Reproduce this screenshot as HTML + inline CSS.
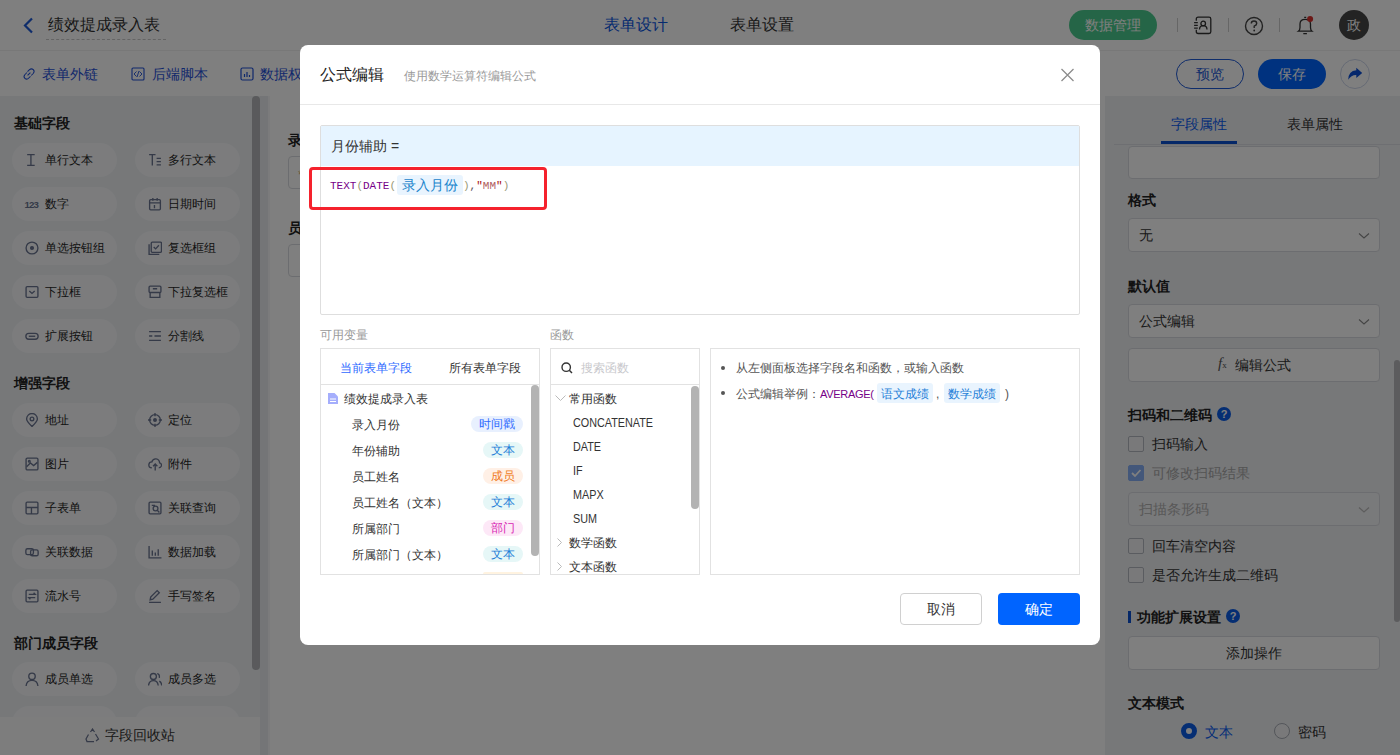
<!DOCTYPE html>
<html><head><meta charset="utf-8">
<style>
*{box-sizing:border-box;margin:0;padding:0}
html,body{width:1400px;height:755px;overflow:hidden;background:#fff;font-family:"Liberation Sans",sans-serif;color:#333}
.a{position:absolute}
.t{white-space:nowrap;line-height:1}
/* header */
#hdr{left:0;top:0;width:1400px;height:51px;background:#fff;border-bottom:1px solid #f0f0f0}
#tb{left:0;top:51px;width:1400px;height:45px;background:#fff}
#lp{left:0;top:96px;width:260px;height:659px;background:#eef0f3}
#band{left:260px;top:96px;width:8px;height:659px;background:#e9ebee}
#cv{left:268px;top:96px;width:837px;height:659px;background:#f6f7f9}
#rp{left:1105px;top:96px;width:295px;height:659px;background:#eef0f3}
.chip{position:absolute;width:105px;height:34px;border-radius:17px;background:#f8f9fb}
.chip svg{position:absolute;left:13px;top:10px}
.chip span{position:absolute;left:33px;top:9.5px;font-size:12px;line-height:14px;color:#262626;white-space:nowrap}
.sec{position:absolute;left:14px;font-size:14px;font-weight:bold;color:#222;line-height:14px;white-space:nowrap}
.ic{fill:none;stroke:#6a7490;stroke-width:1.25}
.box{position:absolute;border:1px solid #d9dbe0;border-radius:4px;background:#fff}
.lbl{position:absolute;font-size:14px;font-weight:bold;color:#222;line-height:14px;white-space:nowrap}
.cb{position:absolute;width:16px;height:16px;border:1px solid #b4b8c0;border-radius:2px;background:#f2f3f5}
#ov{left:0;top:0;width:1400px;height:755px;background:rgba(0,0,0,.5)}
.fn{font-size:12px;color:#333;transform:scaleX(0.9);transform-origin:0 0}
#modal{left:300px;top:45px;width:800px;height:600px;background:#fff;border-radius:8px}
</style></head><body>

<!-- ===== HEADER ===== -->
<div id="hdr" class="a"></div>
<svg class="a" style="left:22px;top:17px" width="12" height="17" viewBox="0 0 12 17"><path d="M10 1.5 L3 8.5 L10 15.5" fill="none" stroke="#1f5ad6" stroke-width="2.2"/></svg>
<div class="a t" style="left:48px;top:17px;font-size:16px;color:#333">绩效提成录入表</div>
<div class="a" style="left:46px;top:39px;width:120px;border-top:1px dashed #c8c8c8"></div>
<div class="a t" style="left:604px;top:17px;font-size:16px;color:#0a56e0">表单设计</div>
<div class="a t" style="left:730px;top:17px;font-size:16px;color:#333">表单设置</div>
<div class="a" style="left:1069px;top:10px;width:88px;height:30px;border-radius:15px;background:#4bcb8e"></div>
<div class="a t" style="left:1085px;top:18px;font-size:14px;color:#fff">数据管理</div>
<div class="a" style="left:1177px;top:18px;width:1px;height:14px;background:#ccc"></div>
<div class="a" style="left:1228px;top:18px;width:1px;height:14px;background:#ccc"></div>
<div class="a" style="left:1279px;top:18px;width:1px;height:14px;background:#ccc"></div>
<svg class="a" style="left:1193px;top:16px" width="20" height="20" viewBox="0 0 20 20" fill="none" stroke="#333" stroke-width="1.3"><path d="M3.3 4.8 V3 Q3.3 1.2 5.1 1.2 H16 Q17.8 1.2 17.8 3 V15.7 Q17.8 17.5 16 17.5 H5.1 Q3.3 17.5 3.3 15.7 V13.8"/><path d="M1.1 6.6h3.7M1.1 9.3h3.7M1.1 12.1h3.7"/><circle cx="10.2" cy="7.5" r="2.3"/><path d="M6.5 13.6 Q6.5 9.6 10.2 9.6 Q14 9.6 14 13.6"/></svg>
<svg class="a" style="left:1244px;top:16px" width="20" height="20" viewBox="0 0 20 20"><circle cx="10" cy="10" r="8.5" fill="none" stroke="#444" stroke-width="1.4"/><path d="M7.3 7.6 Q7.3 5 10 5 Q12.7 5 12.7 7.4 Q12.7 9 10.2 10.2 L10.2 12" fill="none" stroke="#444" stroke-width="1.4"/><circle cx="10.2" cy="14.5" r="0.9" fill="#444"/></svg>
<svg class="a" style="left:1296px;top:15px" width="20" height="21" viewBox="0 0 20 21" fill="none" stroke="#333" stroke-width="1.3"><path d="M2.4 16.2 Q4 15 4 12.5 V9 Q4 4.3 9.2 4.3 Q14.5 4.3 14.5 9 V12.5 Q14.5 15 16 16.2 Z"/><path d="M8.2 2.3h2M7.3 18.6h3.6"/><circle cx="14.1" cy="3.9" r="3" fill="#d9302c" stroke="none"/></svg>
<div class="a" style="left:1339px;top:10px;width:30px;height:30px;border-radius:15px;background:#474747"></div>
<div class="a t" style="left:1347px;top:18px;font-size:14px;color:#fff">政</div>

<!-- ===== TOOLBAR ===== -->
<div id="tb" class="a"></div>
<svg class="a" style="left:22px;top:67px" width="14" height="14" viewBox="0 0 14 14"><path d="M5.6 8.4 L8.4 5.6 M5 5.5 L3 7.5 Q1 9.5 3 11.5 Q5 13 6.8 11 L8.5 9.3 M5.5 4.7 L7.5 2.7 Q9.5 1 11.3 2.7 Q13 4.5 11.2 6.5 L9.2 8.5" fill="none" stroke="#1f50d8" stroke-width="1.05"/></svg>
<div class="a t" style="left:42px;top:67px;font-size:14px;color:#1f50d8">表单外链</div>
<svg class="a" style="left:131px;top:67px" width="14" height="14" viewBox="0 0 14 14"><rect x="1" y="1" width="12" height="12" rx="1" fill="none" stroke="#1f50d8" stroke-width="1.1"/><path d="M5.5 4.5 L3 7 L5.5 9.5 M8.5 4.5 L11 7 L8.5 9.5 M8 4 L6 10" fill="none" stroke="#1f50d8" stroke-width="0.9"/></svg>
<div class="a t" style="left:152px;top:67px;font-size:14px;color:#1f50d8">后端脚本</div>
<svg class="a" style="left:240px;top:67px" width="14" height="14" viewBox="0 0 14 14"><rect x="1" y="1" width="12" height="12" rx="1.5" fill="none" stroke="#1f50d8" stroke-width="1.2"/><path d="M4.5 10V7M7 10V5M9.5 10V8" stroke="#1f50d8" stroke-width="1.2"/></svg>
<div class="a t" style="left:260px;top:67px;font-size:14px;color:#1f50d8">数据权限</div>
<div class="a" style="left:1176px;top:59px;width:68px;height:30px;border-radius:15px;border:1.5px solid #1f5ad6;background:#fff"></div>
<div class="a t" style="left:1196px;top:67px;font-size:14px;color:#1f5ad6">预览</div>
<div class="a" style="left:1258px;top:59px;width:68px;height:30px;border-radius:15px;background:#0064ff"></div>
<div class="a t" style="left:1278px;top:67px;font-size:14px;color:#fff">保存</div>
<div class="a" style="left:1340px;top:59px;width:30px;height:30px;border-radius:15px;background:#fff;border:1px solid #cdd6ea"></div>
<svg class="a" style="left:1347px;top:66px" width="16" height="16" viewBox="0 0 16 16"><path d="M1.2 13.8 Q1.4 5 9.3 4.3 V1.7 L15.2 6.9 L9.3 12 V9 Q4.3 8.8 1.2 13.8 Z" fill="#0a4fd8"/></svg>

<!-- ===== LEFT PANEL ===== -->
<div id="lp" class="a"></div>
<div class="a" style="left:0;top:0;width:1px;height:1px">
<div class="sec" style="top:116px">基础字段</div>
<div class="sec" style="top:376px">增强字段</div>
<div class="sec" style="top:636px">部门成员字段</div>
<div class="chip" style="left:12px;top:143px"><svg width="14" height="14" viewBox="0 0 13 13" class="ic"><path d="M2 1.5h7M2 11.5h7M5.5 1.5v10" /></svg><span>单行文本</span></div>
<div class="chip" style="left:135px;top:143px"><svg width="14" height="14" viewBox="0 0 13 13" class="ic"><path d="M1 1.5h6M4 1.5v10M8 5h4M8 8h4M8 11h4"/></svg><span>多行文本</span></div>
<div class="chip" style="left:12px;top:187px"><svg width="14" height="14" viewBox="0 0 13 13" class="ic" style="overflow:visible"><text x="-0.5" y="9.8" font-size="9" font-weight="bold" fill="#6a7490" stroke="none" font-family="Liberation Sans" textLength="13.5">123</text></svg><span>数字</span></div>
<div class="chip" style="left:135px;top:187px"><svg width="14" height="14" viewBox="0 0 13 13" class="ic"><rect x="1.5" y="2.5" width="10" height="9.5" rx="1"/><path d="M1.5 5.5h10M4.5 1v2.5M8.5 1v2.5M6 7.5v3"/></svg><span>日期时间</span></div>
<div class="chip" style="left:12px;top:231px"><svg width="14" height="14" viewBox="0 0 13 13" class="ic"><circle cx="6.5" cy="6.5" r="5.5"/><circle cx="6.5" cy="6.5" r="1.3" fill="#6a7490"/></svg><span>单选按钮组</span></div>
<div class="chip" style="left:135px;top:231px"><svg width="14" height="14" viewBox="0 0 13 13" class="ic"><path d="M1 3v9.5h9.5"/><rect x="3" y="1" width="9.5" height="9.5" rx="1"/><path d="M5.3 5.5l1.8 1.8 3-3.3"/></svg><span>复选框组</span></div>
<div class="chip" style="left:12px;top:275px"><svg width="14" height="14" viewBox="0 0 13 13" class="ic"><rect x="1" y="1.5" width="11" height="10" rx="1"/><path d="M4 5.5l2.5 2.3 2.5-2.3"/></svg><span>下拉框</span></div>
<div class="chip" style="left:135px;top:275px"><svg width="14" height="14" viewBox="0 0 13 13" class="ic"><rect x="1" y="1" width="11" height="6" rx="1"/><path d="M2 7v4.5h9V7M4.5 3.5h4"/></svg><span>下拉复选框</span></div>
<div class="chip" style="left:12px;top:319px"><svg width="14" height="14" viewBox="0 0 13 13" class="ic"><rect x="0.8" y="4" width="11.4" height="5.5" rx="2.75"/><path d="M3.5 6.75h6"/></svg><span>扩展按钮</span></div>
<div class="chip" style="left:135px;top:319px"><svg width="14" height="14" viewBox="0 0 13 13" class="ic"><path d="M1 2.5h11M1 6.5h3M6 6.5h6M1 10.5h11"/></svg><span>分割线</span></div>
<div class="chip" style="left:12px;top:403px"><svg width="14" height="14" viewBox="0 0 13 13" class="ic"><path d="M6.5 12.5 Q1.5 7.5 1.5 5.5 A5 5 0 0 1 11.5 5.5 Q11.5 7.5 6.5 12.5Z"/><circle cx="6.5" cy="5.5" r="1.7"/></svg><span>地址</span></div>
<div class="chip" style="left:135px;top:403px"><svg width="14" height="14" viewBox="0 0 13 13" class="ic"><circle cx="6.5" cy="6.5" r="5"/><circle cx="6.5" cy="6.5" r="1.2" fill="#6a7490"/><path d="M6.5 0v3M6.5 10v3M0 6.5h3M10 6.5h3"/></svg><span>定位</span></div>
<div class="chip" style="left:12px;top:447px"><svg width="14" height="14" viewBox="0 0 13 13" class="ic"><rect x="1" y="1" width="11" height="11" rx="1.2"/><path d="M1.5 9 L5 5.5 L8 8 L11.5 5"/><circle cx="4" cy="4" r="0.8"/></svg><span>图片</span></div>
<div class="chip" style="left:135px;top:447px"><svg width="14" height="14" viewBox="0 0 13 13" class="ic"><path d="M3.5 10 Q0.5 10 0.8 7 Q1.2 4.5 3.5 4.6 Q4.5 1.5 7.5 1.8 Q10.5 2.2 10.8 5.5 Q12.8 6 12.5 8.2 Q12 10 10 10"/><path d="M6.7 12.5V6.5M4.7 8.5l2-2 2 2"/></svg><span>附件</span></div>
<div class="chip" style="left:12px;top:491px"><svg width="14" height="14" viewBox="0 0 13 13" class="ic"><rect x="1" y="1" width="11" height="11" rx="1"/><path d="M1 6h11M6 6v6"/></svg><span>子表单</span></div>
<div class="chip" style="left:135px;top:491px"><svg width="14" height="14" viewBox="0 0 13 13" class="ic"><rect x="1" y="1" width="11" height="11" rx="1"/><circle cx="7" cy="7" r="2.2"/><path d="M8.6 8.6l2 2M3.5 4h3"/></svg><span>关联查询</span></div>
<div class="chip" style="left:12px;top:535px"><svg width="14" height="14" viewBox="0 0 13 13" class="ic"><rect x="0.8" y="3.5" width="7" height="5.5" rx="1.5"/><rect x="5.2" y="4.5" width="7" height="5.5" rx="1.5"/></svg><span>关联数据</span></div>
<div class="chip" style="left:135px;top:535px"><svg width="14" height="14" viewBox="0 0 13 13" class="ic"><path d="M1 1v11h11.5M4 5v5M6.8 7v3M9.5 4v6"/></svg><span>数据加载</span></div>
<div class="chip" style="left:12px;top:579px"><svg width="14" height="14" viewBox="0 0 13 13" class="ic"><rect x="1" y="1" width="11" height="11" rx="1"/><path d="M3.5 5h6l-1.5-1.5M9.5 8h-6l1.5 1.5"/></svg><span>流水号</span></div>
<div class="chip" style="left:135px;top:579px"><svg width="14" height="14" viewBox="0 0 13 13" class="ic"><path d="M2 10 L2.5 7.5 L8.5 1.5 L10.5 3.5 L4.5 9.5 Z M1 12.5h11"/></svg><span>手写签名</span></div>
<div class="chip" style="left:12px;top:662px"><svg width="14" height="14" viewBox="0 0 13 13" class="ic"><circle cx="6.5" cy="4" r="3"/><path d="M1 13 Q1.5 7.8 6.5 7.8 Q11.5 7.8 12 13"/></svg><span>成员单选</span></div>
<div class="chip" style="left:135px;top:662px"><svg width="14" height="14" viewBox="0 0 13 13" class="ic"><circle cx="5" cy="4.2" r="2.8"/><path d="M0.5 12.5 Q1 8 5 8 Q9 8 9.5 12.5M8.5 1.5 Q11 1.8 10.5 5.5M10.5 8.5 Q12.5 9.5 12.8 12.5"/></svg><span>成员多选</span></div>
<div class="chip" style="left:12px;top:706px"><svg width="14" height="14" viewBox="0 0 13 13" class="ic"></svg></div>
<div class="chip" style="left:135px;top:706px"><svg width="14" height="14" viewBox="0 0 13 13" class="ic"></svg></div>
</div>
<div class="a" style="left:252px;top:96px;width:8px;height:574px;border-radius:4px;background:#b4b5b8"></div>
<div class="a" style="left:0;top:717px;width:260px;height:38px;background:#fbfbfb"></div>
<svg class="a ic" style="left:85px;top:728px" width="15" height="15" viewBox="0 0 15 15"><path d="M5.5 4 L7.5 1 L9.5 4 M10.5 6 L13.5 11 L11 13 M9 13.5H2 L1 11 L3.5 6.5"/></svg>
<div class="a t" style="left:105px;top:728px;font-size:14px;color:#333">字段回收站</div>
<div id="band" class="a"></div>
<div id="cv" class="a"></div>
<div class="a" style="left:270px;top:96px;width:835px;height:659px;background:#fff"></div>
<div class="a t" style="left:288px;top:133px;font-size:14px;font-weight:bold;color:#222">录入月份</div>
<div class="box" style="left:288px;top:156px;width:400px;height:33px"></div>
<div class="a t" style="left:298px;top:168px;font-size:13px;color:#c9a86a">*</div>
<div class="a t" style="left:288px;top:221px;font-size:14px;font-weight:bold;color:#222">员工姓名</div>
<div class="box" style="left:288px;top:244px;width:400px;height:33px"></div>

<!-- ===== RIGHT PANEL ===== -->
<div id="rp" class="a"></div>
<div class="a t" style="left:1171px;top:117px;font-size:14px;color:#0a5cf0">字段属性</div>
<div class="a t" style="left:1287px;top:117px;font-size:14px;color:#333">表单属性</div>
<div class="a" style="left:1114px;top:144px;width:286px;height:1px;background:#dcdfe4"></div>
<div class="a" style="left:1161px;top:141px;width:76px;height:3px;background:#0a50d0"></div>
<div class="box" style="left:1128px;top:146px;width:252px;height:33px"></div>
<div class="lbl" style="left:1128px;top:193px">格式</div>
<div class="box" style="left:1128px;top:218px;width:252px;height:34px"></div>
<div class="a t" style="left:1139px;top:228px;font-size:14px;color:#333">无</div>
<svg class="a" style="left:1358px;top:232px" width="12" height="8" viewBox="0 0 12 8"><path d="M1 1.5 L6 6 L11 1.5" fill="none" stroke="#8a8a8a" stroke-width="1.1"/></svg>
<div class="lbl" style="left:1128px;top:279px">默认值</div>
<div class="box" style="left:1128px;top:304px;width:252px;height:34px"></div>
<div class="a t" style="left:1139px;top:314px;font-size:14px;color:#333">公式编辑</div>
<svg class="a" style="left:1358px;top:318px" width="12" height="8" viewBox="0 0 12 8"><path d="M1 1.5 L6 6 L11 1.5" fill="none" stroke="#8a8a8a" stroke-width="1.1"/></svg>
<div class="box" style="left:1128px;top:348px;width:252px;height:34px"></div>
<div class="a t" style="left:1218px;top:356px;font-size:15px;font-style:italic;font-family:'Liberation Serif',serif;color:#555">f<span style="font-size:9px;font-style:normal">x</span></div>
<div class="a t" style="left:1235px;top:358px;font-size:14px;color:#333">编辑公式</div>
<div class="lbl" style="left:1128px;top:408px">扫码和二维码</div>
<div class="a" style="left:1217px;top:407px;width:14px;height:14px;border-radius:7px;background:#0a5ce6;color:#fff;font-size:11px;font-weight:bold;line-height:14px;text-align:center">?</div>
<div class="cb" style="left:1128px;top:436px"></div>
<div class="a t" style="left:1152px;top:437px;font-size:14px;color:#333">扫码输入</div>
<div class="cb" style="left:1128px;top:465px;background:#86aef5;border-color:#86aef5"></div>
<svg class="a" style="left:1130px;top:467px" width="12" height="12" viewBox="0 0 12 12"><path d="M2 6 L5 9 L10.5 3" fill="none" stroke="#fff" stroke-width="1.8"/></svg>
<div class="a t" style="left:1152px;top:466px;font-size:14px;color:#a8a8a8">可修改扫码结果</div>
<div class="box" style="left:1128px;top:492px;width:252px;height:34px;background:#f3f4f6"></div>
<div class="a t" style="left:1139px;top:502px;font-size:14px;color:#b0b0b0">扫描条形码</div>
<svg class="a" style="left:1358px;top:506px" width="12" height="8" viewBox="0 0 12 8"><path d="M1 1.5 L6 6 L11 1.5" fill="none" stroke="#bbb" stroke-width="1.3"/></svg>
<div class="cb" style="left:1128px;top:538px"></div>
<div class="a t" style="left:1152px;top:539px;font-size:14px;color:#333">回车清空内容</div>
<div class="cb" style="left:1128px;top:567px"></div>
<div class="a t" style="left:1152px;top:568px;font-size:14px;color:#333">是否允许生成二维码</div>
<div class="a" style="left:1128px;top:611px;width:3px;height:12px;background:#0a50d0"></div>
<div class="lbl" style="left:1137px;top:610px">功能扩展设置</div>
<div class="a" style="left:1226px;top:609px;width:14px;height:14px;border-radius:7px;background:#0a5ce6;color:#fff;font-size:11px;font-weight:bold;line-height:14px;text-align:center">?</div>
<div class="box" style="left:1128px;top:636px;width:252px;height:34px"></div>
<div class="a t" style="left:1226px;top:646px;font-size:14px;color:#333">添加操作</div>
<div class="lbl" style="left:1128px;top:696px">文本模式</div>
<div class="a" style="left:1181px;top:723px;width:16px;height:16px;border-radius:8px;border:5px solid #0a5ce6;background:#fff"></div>
<div class="a t" style="left:1205px;top:725px;font-size:14px;color:#0a5cf0">文本</div>
<div class="a" style="left:1274px;top:723px;width:16px;height:16px;border-radius:8px;border:1px solid #a8acb4;background:#f2f3f5"></div>
<div class="a t" style="left:1298px;top:725px;font-size:14px;color:#333">密码</div>
<div class="a" style="left:1394px;top:360px;width:6px;height:262px;border-radius:3px;background:#b8b9bc"></div>

<!-- ===== OVERLAY ===== -->
<div id="ov" class="a"></div>

<!-- ===== MODAL ===== -->
<div id="modal" class="a"></div>
<div class="a t" style="left:320px;top:67px;font-size:16px;color:#222">公式编辑</div>
<div class="a t" style="left:404px;top:70px;font-size:12px;color:#9a9a9a">使用数学运算符编辑公式</div>
<svg class="a" style="left:1060px;top:68px" width="15" height="14" viewBox="0 0 15 14"><path d="M1.5 1 L13.5 13 M13.5 1 L1.5 13" stroke="#8c8c8c" stroke-width="1.3"/></svg>
<div class="a" style="left:300px;top:104px;width:800px;height:1px;background:#e8e8e8"></div>
<!-- formula box -->
<div class="a" style="left:320px;top:125px;width:760px;height:190px;border:1px solid #dedede;border-radius:2px;background:#fff"></div>
<div class="a" style="left:321px;top:126px;width:758px;height:40px;background:#e6f4ff;border-radius:1px 1px 0 0"></div>
<div class="a t" style="left:331px;top:139px;font-size:14px;color:#333">月份辅助 =</div>
<div class="a t" style="left:330px;top:181px;font-size:11px;font-family:'Liberation Mono',monospace;color:#770088">TEXT<span style="color:#997">(</span>DATE<span style="color:#997">(</span></div>
<div class="a" style="left:397px;top:175px;width:66px;height:20px;border-radius:3px;background:#e9f4fe"></div>
<div class="a t" style="left:402px;top:178px;font-size:14px;color:#1a84cc">录入月份</div>
<div class="a t" style="left:463px;top:181px;font-size:11px;font-family:'Liberation Mono',monospace;color:#997">)<span style="color:#555">,</span><span style="color:#a11">"<span style="color:#b06060">MM</span>"</span>)</div>
<div class="a" style="left:309px;top:167px;width:238px;height:43px;border:3px solid #f5222d;border-radius:4px"></div>
<!-- lower -->
<div class="a t" style="left:320px;top:329px;font-size:12px;color:#999">可用变量</div>
<div class="a t" style="left:550px;top:329px;font-size:12px;color:#999">函数</div>
<div class="a" style="left:320px;top:348px;width:220px;height:227px;border:1px solid #e2e2e2"></div>
<div class="a" style="left:321px;top:384px;width:218px;height:1px;background:#e2e2e2"></div>
<div class="a t" style="left:340px;top:362px;font-size:12px;color:#2f6bff">当前表单字段</div>
<div class="a t" style="left:449px;top:362px;font-size:12px;color:#333">所有表单字段</div>
<svg class="a" style="left:328px;top:393px" width="10" height="11" viewBox="0 0 10 11"><path d="M0 0 H6.5 L10 3.5 V11 H0 Z" fill="#a5aefc"/><path d="M2 6h6M2 8.5h6" stroke="#fff" stroke-width="1"/></svg>
<div class="a t" style="left:344px;top:393px;font-size:12px;color:#333">绩效提成录入表</div>
<div class="a t" style="left:352px;top:419px;font-size:12px;color:#333">录入月份</div>
<div class="a t" style="left:471px;top:416px;width:52px;height:16px;border-radius:8px;background:#e8f0fe;color:#2f6bff;font-size:12px;line-height:16px;text-align:center">时间戳</div>
<div class="a t" style="left:352px;top:445px;font-size:12px;color:#333">年份辅助</div>
<div class="a t" style="left:483px;top:442px;width:40px;height:16px;border-radius:8px;background:#e6f7f7;color:#1f7fd8;font-size:12px;line-height:16px;text-align:center">文本</div>
<div class="a t" style="left:352px;top:471px;font-size:12px;color:#333">员工姓名</div>
<div class="a t" style="left:483px;top:468px;width:40px;height:16px;border-radius:8px;background:#fff0e6;color:#f07b22;font-size:12px;line-height:16px;text-align:center">成员</div>
<div class="a t" style="left:352px;top:497px;font-size:12px;color:#333">员工姓名（文本）</div>
<div class="a t" style="left:483px;top:494px;width:40px;height:16px;border-radius:8px;background:#e6f7f7;color:#1f7fd8;font-size:12px;line-height:16px;text-align:center">文本</div>
<div class="a t" style="left:352px;top:523px;font-size:12px;color:#333">所属部门</div>
<div class="a t" style="left:483px;top:520px;width:40px;height:16px;border-radius:8px;background:#fde8f7;color:#d826b4;font-size:12px;line-height:16px;text-align:center">部门</div>
<div class="a t" style="left:352px;top:549px;font-size:12px;color:#333">所属部门（文本）</div>
<div class="a t" style="left:483px;top:546px;width:40px;height:16px;border-radius:8px;background:#e6f7f7;color:#1f7fd8;font-size:12px;line-height:16px;text-align:center">文本</div>
<div class="a" style="left:483px;top:572px;width:40px;height:2px;border-radius:8px 8px 0 0;background:#fff3e0"></div>
<div class="a" style="left:531px;top:385px;width:8px;height:171px;border-radius:4px;background:#b3b3b3"></div>
<div class="a" style="left:550px;top:348px;width:150px;height:227px;border:1px solid #e2e2e2"></div>
<div class="a" style="left:551px;top:384px;width:148px;height:1px;background:#e2e2e2"></div>
<svg class="a" style="left:561px;top:362px" width="12" height="12" viewBox="0 0 12 12"><circle cx="5.2" cy="5.2" r="4.2" fill="none" stroke="#333" stroke-width="1.4"/><path d="M8.3 8.3 L11 11" stroke="#333" stroke-width="1.5"/></svg>
<div class="a t" style="left:581px;top:362px;font-size:12px;color:#c8c8cc">搜索函数</div>
<svg class="a" style="left:555px;top:395px" width="11" height="7" viewBox="0 0 11 7"><path d="M0.5 0.5 L5.5 5.5 L10.5 0.5" fill="none" stroke="#bbb" stroke-width="1"/></svg>
<div class="a t" style="left:569px;top:393px;font-size:12px;color:#333">常用函数</div>
<div class="a t fn" style="left:573px;top:417px">CONCATENATE</div>
<div class="a t fn" style="left:573px;top:441px">DATE</div>
<div class="a t fn" style="left:573px;top:465px">IF</div>
<div class="a t fn" style="left:573px;top:489px">MAPX</div>
<div class="a t fn" style="left:573px;top:513px">SUM</div>
<svg class="a" style="left:557px;top:538px" width="5" height="9" viewBox="0 0 5 9"><path d="M0.5 0.5 L4.5 4.5 L0.5 8.5" fill="none" stroke="#bbb" stroke-width="1"/></svg>
<div class="a t" style="left:569px;top:537px;font-size:12px;color:#333">数学函数</div>
<svg class="a" style="left:557px;top:562px" width="5" height="9" viewBox="0 0 5 9"><path d="M0.5 0.5 L4.5 4.5 L0.5 8.5" fill="none" stroke="#bbb" stroke-width="1"/></svg>
<div class="a t" style="left:569px;top:561px;font-size:12px;color:#333;height:14px;overflow:hidden">文本函数</div>
<div class="a" style="left:691px;top:386px;width:8px;height:123px;border-radius:4px;background:#b3b3b3"></div>
<div class="a" style="left:710px;top:348px;width:370px;height:227px;border:1px solid #e2e2e2"></div>
<div class="a" style="left:721px;top:366px;width:4px;height:4px;border-radius:2px;background:#555"></div>
<div class="a t" style="left:736px;top:362px;font-size:12px;color:#555">从左侧面板选择字段名和函数，或输入函数</div>
<div class="a" style="left:721px;top:391px;width:4px;height:4px;border-radius:2px;background:#555"></div>
<div class="a t" style="left:736px;top:388px;font-size:12px;color:#555">公式编辑举例：<span style="color:#770088;font-size:11px;letter-spacing:-0.3px">AVERAGE(</span></div>
<div class="a" style="left:877px;top:383px;width:56px;height:20px;border-radius:3px;background:#e9f4fe"></div>
<div class="a t" style="left:881px;top:388px;font-size:12px;color:#1f7fd8">语文成绩</div>
<div class="a t" style="left:936px;top:388px;font-size:12px;color:#555">,</div>
<div class="a" style="left:944px;top:383px;width:56px;height:20px;border-radius:3px;background:#e9f4fe"></div>
<div class="a t" style="left:948px;top:388px;font-size:12px;color:#1f7fd8">数学成绩</div>
<div class="a t" style="left:1005px;top:388px;font-size:12px;color:#555">)</div>
<!-- buttons -->
<div class="a" style="left:900px;top:593px;width:82px;height:32px;border:1px solid #d0d0d0;border-radius:4px;background:#fff"></div>
<div class="a t" style="left:927px;top:602px;font-size:14px;color:#333">取消</div>
<div class="a" style="left:998px;top:593px;width:82px;height:32px;border-radius:4px;background:#0064ff"></div>
<div class="a t" style="left:1025px;top:602px;font-size:14px;color:#fff">确定</div>

</body></html>
